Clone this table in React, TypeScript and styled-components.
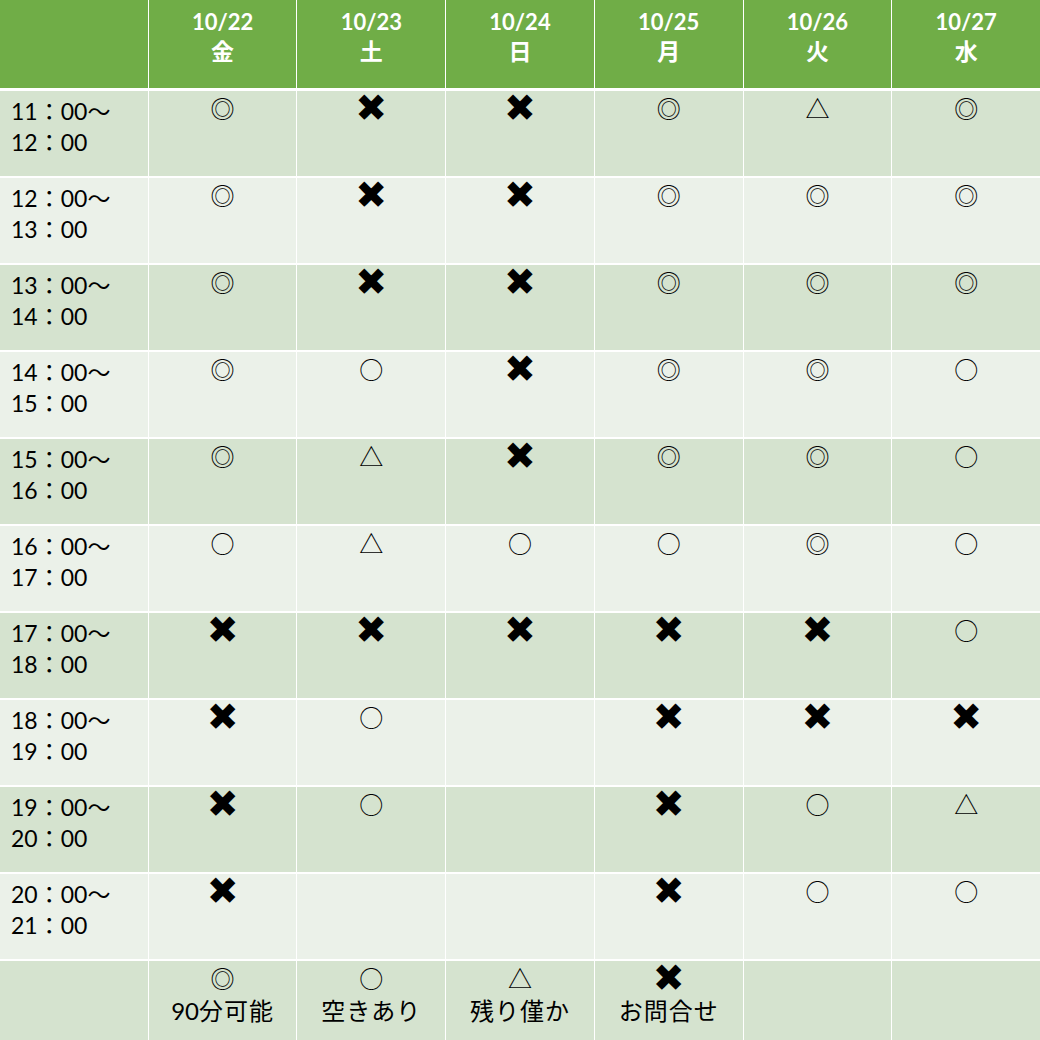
import React from "react";
import styled, { createGlobalStyle } from "styled-components";

const GlobalStyle = createGlobalStyle`
  html, body {
    margin: 0;
    padding: 0;
    background: #ffffff;
    overflow: hidden;
  }
`;

type Mark = "◎" | "○" | "△" | "×" | "";

const days = [
  { date: "10/22", day: "金" },
  { date: "10/23", day: "土" },
  { date: "10/24", day: "日" },
  { date: "10/25", day: "月" },
  { date: "10/26", day: "火" },
  { date: "10/27", day: "水" },
];

const rows: { from: string; to: string; marks: Mark[] }[] = [
  { from: "11", to: "12", marks: ["◎", "×", "×", "◎", "△", "◎"] },
  { from: "12", to: "13", marks: ["◎", "×", "×", "◎", "◎", "◎"] },
  { from: "13", to: "14", marks: ["◎", "×", "×", "◎", "◎", "◎"] },
  { from: "14", to: "15", marks: ["◎", "○", "×", "◎", "◎", "○"] },
  { from: "15", to: "16", marks: ["◎", "△", "×", "◎", "◎", "○"] },
  { from: "16", to: "17", marks: ["○", "△", "○", "○", "◎", "○"] },
  { from: "17", to: "18", marks: ["×", "×", "×", "×", "×", "○"] },
  { from: "18", to: "19", marks: ["×", "○", "", "×", "×", "×"] },
  { from: "19", to: "20", marks: ["×", "○", "", "×", "○", "△"] },
  { from: "20", to: "21", marks: ["×", "", "", "×", "○", "○"] },
];

const legend: { mark: Mark; label: string }[] = [
  { mark: "◎", label: "90分可能" },
  { mark: "○", label: "空きあり" },
  { mark: "△", label: "残り僅か" },
  { mark: "×", label: "お問合せ" },
];

const Table = styled.div`
  width: 1040px;
  display: grid;
  grid-template-columns: repeat(7, 1fr);
  grid-template-rows: 89px;
  grid-auto-rows: 85px;
  column-gap: 1px;
  row-gap: 2px;
  background: #ffffff;
  font-family: Lato, "Noto Sans CJK JP", sans-serif;
`;

const HeadCell = styled.div`
  box-sizing: border-box;
  background: #70ad47;
  border-bottom: 1px solid #ffffff;
  color: #ffffff;
  font-weight: 700;
  font-size: 22px;
  line-height: 29px;
  padding-top: 7px;
  display: flex;
  flex-direction: column;
  align-items: center;
`;

const Cell = styled.div<{ $band: boolean; $time?: boolean }>`
  background: ${(p) => (p.$band ? "#d5e3cf" : "#ebf1e9")};
  color: #000000;
  display: flex;
  flex-direction: column;
  align-items: ${(p) => (p.$time ? "flex-start" : "center")};
  padding: ${(p) => (p.$time ? "4px 0 0 11px" : "2px 0 0 0")};
  font-size: 23px;
  line-height: 31px;
`;

const TimeLine = styled.span`
  white-space: nowrap;
  height: 31px;
`;

const Wide = styled.span`
  font-family: "Noto Sans CJK JP", sans-serif;
  font-size: 23px;
`;

const Symbol = styled.span<{ $cross: boolean }>`
  display: block;
  height: 30px;
  line-height: 30px;
  font-family: ${(p) =>
    p.$cross ? '"DejaVu Sans", sans-serif' : '"Noto Sans CJK JP", sans-serif'};
  font-size: ${(p) => (p.$cross ? "38px" : "24px")};
  font-weight: ${(p) => (p.$cross ? 700 : 400)};
`;

const Label = styled.span`
  display: block;
  margin-top: 2px;
  font-family: "Noto Sans CJK JP", sans-serif;
  font-size: 24px;
  line-height: 30px;
  letter-spacing: 1px;
`;

const Digits = styled.span`
  font-family: Lato, sans-serif;
  letter-spacing: 0;
`;

const MarkText = ({ mark }: { mark: Mark }) =>
  mark ? <Symbol $cross={mark === "×"}>{mark === "×" ? "✖" : mark}</Symbol> : null;

export default function App() {
  return (
    <>
      <GlobalStyle />
      <Table>
        <HeadCell />
        {days.map((d) => (
          <HeadCell key={d.date}>
            <span>{d.date}</span>
            <Wide>{d.day}</Wide>
          </HeadCell>
        ))}

        {rows.map((r, i) => (
          <React.Fragment key={r.from}>
            <Cell $band={i % 2 === 0} $time>
              <TimeLine>
                {r.from}
                <Wide>：</Wide>00<Wide>～</Wide>
              </TimeLine>
              <TimeLine>
                {r.to}
                <Wide>：</Wide>00
              </TimeLine>
            </Cell>
            {r.marks.map((m, j) => (
              <Cell key={j} $band={i % 2 === 0}>
                <MarkText mark={m} />
              </Cell>
            ))}
          </React.Fragment>
        ))}

        <Cell $band />
        {legend.map((l) => (
          <Cell key={l.label} $band>
            <MarkText mark={l.mark} />
            <Label>
              {l.label.startsWith("90") ? (
                <>
                  <Digits>90</Digits>分可能
                </>
              ) : (
                l.label
              )}
            </Label>
          </Cell>
        ))}
        <Cell $band />
        <Cell $band />
      </Table>
    </>
  );
}
